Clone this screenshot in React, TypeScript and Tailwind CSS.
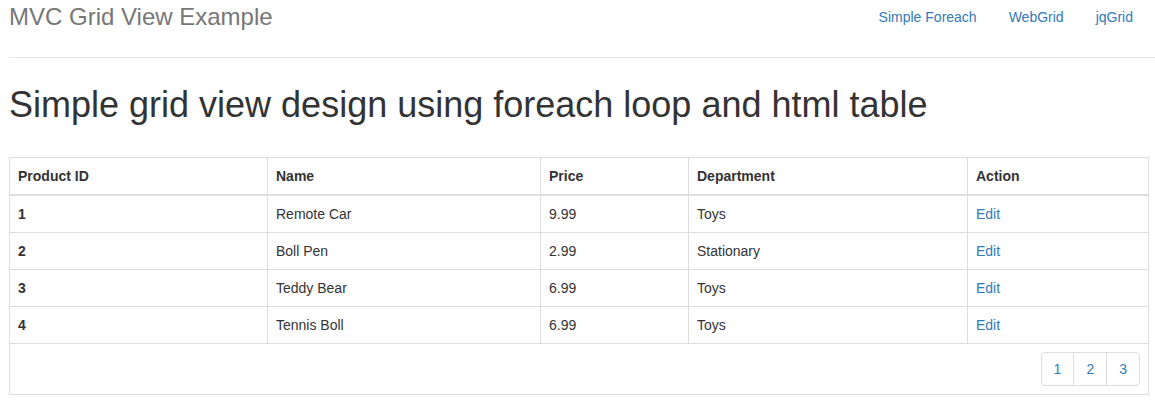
import React from 'react';

const rows = [
  { id: 1, name: 'Remote Car', price: '9.99', dept: 'Toys' },
  { id: 2, name: 'Boll Pen', price: '2.99', dept: 'Stationary' },
  { id: 3, name: 'Teddy Bear', price: '6.99', dept: 'Toys' },
  { id: 4, name: 'Tennis Boll', price: '6.99', dept: 'Toys' },
];

const navLinks = ['Simple Foreach', 'WebGrid', 'jqGrid'];

const App: React.FC = () => {
  return (
    <div className="min-h-[404px] bg-white pl-[9px] text-[14px] text-[#333] font-['Liberation_Sans',Arial,sans-serif]">
      {/* Navbar */}
      <div className="flex h-[58px] items-start justify-between border-b border-[#e5e5e5] pt-[5px]">
        <a className="text-[24px] leading-[24px] text-[#777]">MVC Grid View Example</a>
        <ul className="mt-[2px] flex pr-[6px]">
          {navLinks.map((link) => (
            <li key={link}>
              <a className="block px-[16px] leading-[20px] text-[#337ab7]">{link}</a>
            </li>
          ))}
        </ul>
      </div>

      <h1 className="mt-[27px] text-[36px] leading-[40px] font-normal text-[#333]">
        Simple grid view design using foreach loop and html table
      </h1>

      {/* Grid */}
      <table className="mt-[32px] w-[1140px] table-fixed border-collapse border border-[#ddd]">
        <colgroup>
          <col className="w-[258px]" />
          <col className="w-[273px]" />
          <col className="w-[148px]" />
          <col className="w-[279px]" />
          <col className="w-[181px]" />
        </colgroup>
        <thead>
          <tr>
            {['Product ID', 'Name', 'Price', 'Department', 'Action'].map((h) => (
              <th key={h} className="border border-b-2 border-[#ddd] p-[8px] text-left font-bold leading-[20px]">
                {h}
              </th>
            ))}
          </tr>
        </thead>
        <tbody>
          {rows.map((r) => (
            <tr key={r.id}>
              <td className="border border-[#ddd] p-[8px] font-bold leading-[20px]">{r.id}</td>
              <td className="border border-[#ddd] p-[8px] leading-[20px]">{r.name}</td>
              <td className="border border-[#ddd] p-[8px] leading-[20px]">{r.price}</td>
              <td className="border border-[#ddd] p-[8px] leading-[20px]">{r.dept}</td>
              <td className="border border-[#ddd] p-[8px] leading-[20px]">
                <a className="text-[#337ab7]">Edit</a>
              </td>
            </tr>
          ))}
          <tr>
            <td colSpan={5} className="border border-[#ddd] p-[8px]">
              <div className="flex justify-end">
                <ul className="flex">
                  {[1, 2, 3].map((n, i) => (
                    <li key={n}>
                      <a
                        className={`-ml-px block border border-[#ddd] px-[12px] py-[6px] leading-[20px] text-[#337ab7] ${
                          i === 0 ? 'ml-0 rounded-l-[4px]' : ''
                        } ${i === 2 ? 'rounded-r-[4px]' : ''}`}
                      >
                        {n}
                      </a>
                    </li>
                  ))}
                </ul>
              </div>
            </td>
          </tr>
        </tbody>
      </table>
    </div>
  );
};

export default App;
